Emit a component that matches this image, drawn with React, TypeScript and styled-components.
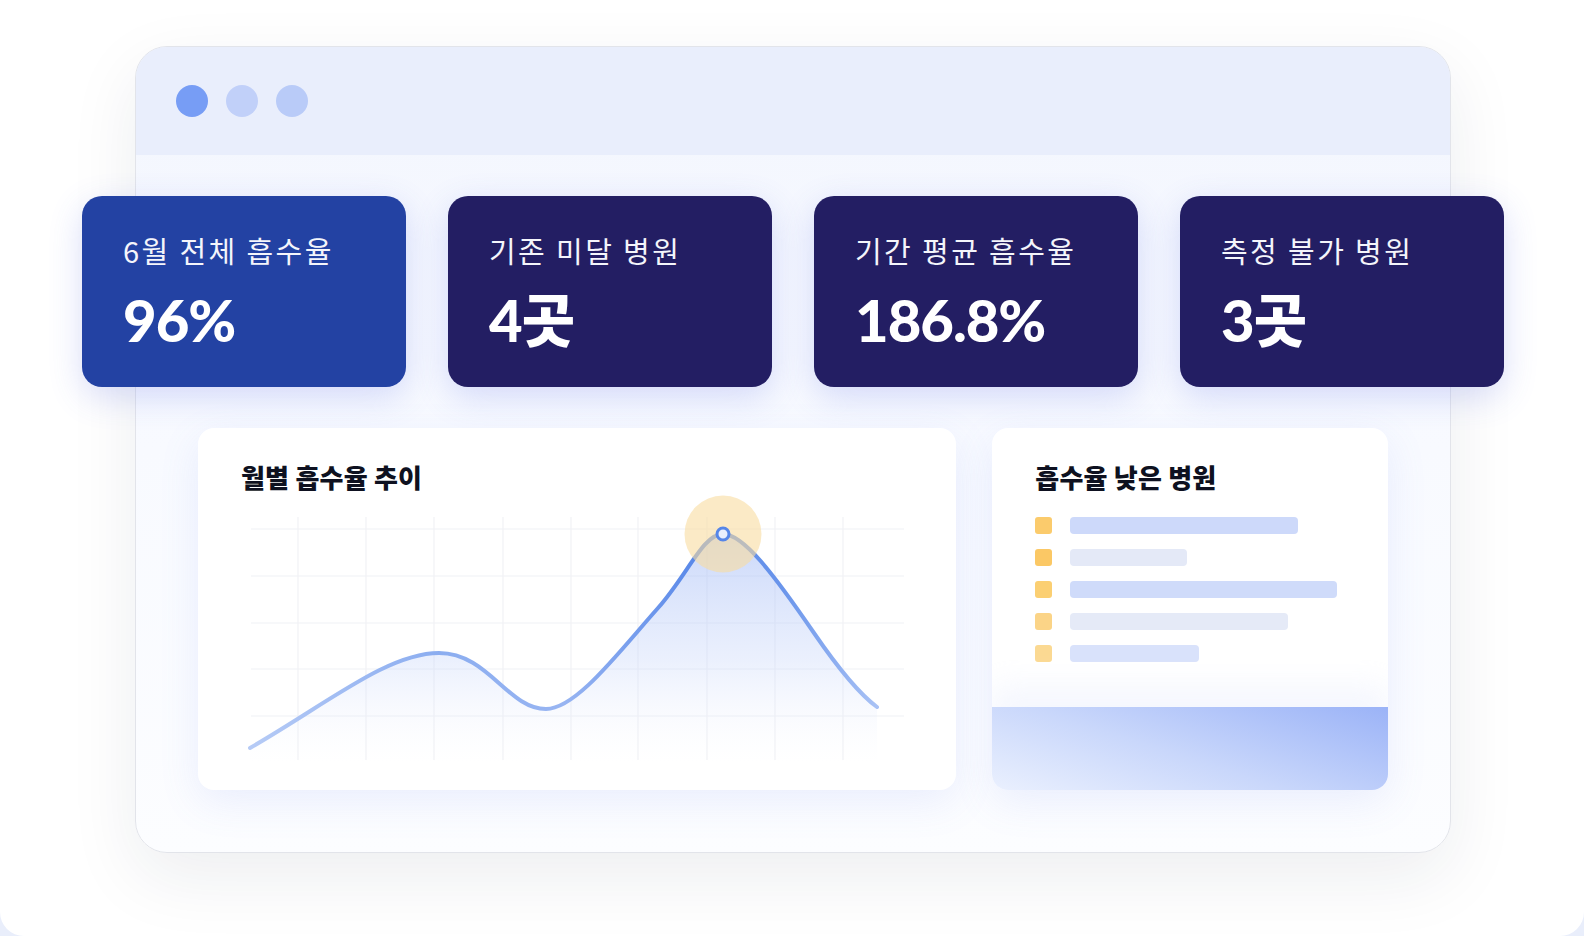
import React from "react";
import styled, { createGlobalStyle } from "styled-components";

const GlobalStyle = createGlobalStyle`
  html, body {
    margin: 0;
    padding: 0;
  }
  body {
    background: #e9eefb;
    font-family: "Noto Sans CJK KR", "Noto Sans", sans-serif;
    -webkit-font-smoothing: antialiased;
  }
  * { box-sizing: border-box; }
`;

const Page = styled.div`
  width: 1584px;
  height: 936px;
  background: #ffffff;
  border-radius: 0 0 24px 24px;
  padding-top: 46px;
  overflow: hidden;
`;

const Window = styled.div`
  margin-left: 135px;
  width: 1316px;
  height: 807px;
  border: 1px solid #e2e4ea;
  border-radius: 32px;
  background: linear-gradient(180deg, #f3f6fe 0%, #f8faff 50%, #fcfdff 100%);
  box-shadow: 0 24px 70px rgba(30, 40, 70, 0.08);
  display: flex;
  flex-direction: column;
`;

const TitleBar = styled.div`
  height: 108px;
  flex: none;
  background: #e9eefc;
  border-radius: 31px 31px 0 0;
  display: flex;
  align-items: center;
  gap: 18px;
  padding-left: 40px;
`;

const Dot = styled.span<{ $color: string }>`
  width: 32px;
  height: 32px;
  border-radius: 50%;
  background: ${(p) => p.$color};
`;

const Body = styled.div`
  flex: 1;
  display: flex;
  flex-direction: column;
  padding-top: 41px;
`;

const StatRow = styled.div`
  display: grid;
  grid-template-columns: repeat(4, 324px);
  gap: 42px;
  justify-content: center;
  margin: 0 -56px;
`;

const StatCard = styled.div<{ $bg: string }>`
  height: 191px;
  border-radius: 20px;
  background: ${(p) => p.$bg};
  padding: 36px 0 0 41px;
  box-shadow: 0 10px 34px rgba(70, 90, 225, 0.2);
  color: #ffffff;
`;

const StatLabel = styled.div`
  font-family: "Noto Sans CJK KR", sans-serif;
  font-size: 29px;
  line-height: 36px;
  font-weight: 400;
  letter-spacing: 2.4px;
  color: #f4f5fb;
`;

const StatValue = styled.div`
  margin-top: 23px;
  font-family: "Lato", "Noto Sans CJK KR", sans-serif;
  font-size: 58px;
  line-height: 57px;
  font-weight: 900;
  letter-spacing: -1px;
  color: #ffffff;
`;

const LowerRow = styled.div`
  display: flex;
  gap: 36px;
  padding: 0 62px;
  margin-top: 41px;
`;

const Panel = styled.div<{ $width: number }>`
  width: ${(p) => p.$width}px;
  height: 362px;
  background: #ffffff;
  border-radius: 16px;
  box-shadow: 0 12px 40px rgba(110, 135, 235, 0.12);
  display: flex;
  flex-direction: column;
  overflow: hidden;
`;

const PanelTitle = styled.div`
  padding: 34px 0 0 43px;
  height: 65px;
  flex: none;
  font-family: "Noto Sans CJK KR", sans-serif;
  font-size: 26px;
  line-height: 30px;
  font-weight: 900;
  letter-spacing: 0.2px;
  color: #0e1120;
`;

const ChartSvg = styled.svg`
  display: block;
  flex: none;
`;

const ListRows = styled.div`
  display: flex;
  flex-direction: column;
  gap: 15px;
  padding: 24px 0 0 43px;
`;

const Row = styled.div`
  display: flex;
  align-items: center;
  gap: 18px;
`;

const Square = styled.span<{ $color: string }>`
  width: 17px;
  height: 17px;
  border-radius: 3px;
  background: ${(p) => p.$color};
  flex: none;
`;

const Bar = styled.span<{ $color: string }>`
  height: 17px;
  border-radius: 4px;
  background: ${(p) => p.$color};
`;

const PanelFooter = styled.div`
  margin-top: auto;
  height: 83px;
  background: linear-gradient(18deg, #eaf0fe 0%, #c9d7fb 45%, #9bb3f7 100%);
  box-shadow: 0 -22px 30px rgba(236, 241, 253, 0.55);
`;

const stats = [
  { label: "6월 전체 흡수율", value: "96%", bg: "#2342a3" },
  { label: "기존 미달 병원", value: "4곳", bg: "#231e63" },
  { label: "기간 평균 흡수율", value: "186.8%", bg: "#231e63" },
  { label: "측정 불가 병원", value: "3곳", bg: "#231e63" },
];

const rows = [
  { w: 228, bar: "#cdd9fa", sq: "#fbcb6c" },
  { w: 117, bar: "#e4e9f7", sq: "#fbc865" },
  { w: 267, bar: "#cfdbfa", sq: "#fbcf72" },
  { w: 218, bar: "#e5eaf7", sq: "#fbd487" },
  { w: 129, bar: "#d9e2fb", sq: "#fbd992" },
];

const vLines = [100, 168, 236, 305, 373, 440, 509, 577, 645];
const hLines = [101, 148, 195, 241, 288];

const curve =
  "M52,320 C130,275 190,225 241,225 C290,225 310,281 348,281 C378,281 420,225 460,180 C490,146 505,106 525,106 C545,106 575,145 616,205 C640,240 660,265 679,279";

function TrendChart() {
  return (
    <ChartSvg width={759} height={297} viewBox="0 65 759 297">
      <defs>
        <linearGradient id="lineGrad" x1="52" y1="0" x2="679" y2="0" gradientUnits="userSpaceOnUse">
          <stop offset="0" stopColor="#b6cbf6" />
          <stop offset="0.3" stopColor="#8badf0" />
          <stop offset="0.5" stopColor="#98b5f2" />
          <stop offset="0.72" stopColor="#5686e8" />
          <stop offset="0.85" stopColor="#6a95eb" />
          <stop offset="1" stopColor="#a9c2f5" />
        </linearGradient>
        <linearGradient id="areaGrad" x1="0" y1="106" x2="0" y2="335" gradientUnits="userSpaceOnUse">
          <stop offset="0" stopColor="#9fb8f5" stopOpacity="0.55" />
          <stop offset="0.55" stopColor="#c5d4fa" stopOpacity="0.35" />
          <stop offset="1" stopColor="#eef2fd" stopOpacity="0" />
        </linearGradient>
      </defs>
      {hLines.map((y) => (
        <line key={"h" + y} x1={53} x2={706} y1={y} y2={y} stroke="#f0f1f5" strokeWidth={1.2} />
      ))}
      {vLines.map((x) => (
        <line key={"v" + x} x1={x} x2={x} y1={89} y2={332} stroke="#f1f2f5" strokeWidth={1.2} />
      ))}
      <path d={curve + " L679,340 L52,340 Z"} fill="url(#areaGrad)" />
      <path d={curve} fill="none" stroke="url(#lineGrad)" strokeWidth={4} strokeLinecap="round" />
      <circle cx={525} cy={106} r={38.5} fill="#f9dca0" opacity={0.6} />
      <circle cx={525} cy={106} r={6} fill="#e9effd" stroke="#5686e8" strokeWidth={3} />
    </ChartSvg>
  );
}

export default function App() {
  return (
    <>
      <GlobalStyle />
      <Page>
        <Window>
          <TitleBar>
            <Dot $color="#779df5" />
            <Dot $color="#c1d0f9" />
            <Dot $color="#b9cbf8" />
          </TitleBar>
          <Body>
            <StatRow>
              {stats.map((s) => (
                <StatCard key={s.label} $bg={s.bg}>
                  <StatLabel>{s.label}</StatLabel>
                  <StatValue>{s.value}</StatValue>
                </StatCard>
              ))}
            </StatRow>
            <LowerRow>
              <Panel $width={759}>
                <PanelTitle>월별 흡수율 추이</PanelTitle>
                <TrendChart />
              </Panel>
              <Panel $width={396}>
                <PanelTitle>흡수율 낮은 병원</PanelTitle>
                <ListRows>
                  {rows.map((r, i) => (
                    <Row key={i}>
                      <Square $color={r.sq} />
                      <Bar $color={r.bar} style={{ width: r.w }} />
                    </Row>
                  ))}
                </ListRows>
                <PanelFooter />
              </Panel>
            </LowerRow>
          </Body>
        </Window>
      </Page>
    </>
  );
}
